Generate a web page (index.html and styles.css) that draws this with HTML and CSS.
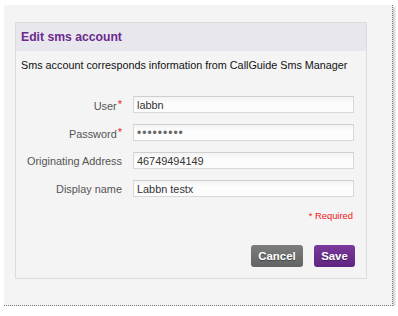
FILE: index.html
```html
<!DOCTYPE html>
<html lang="en">
<head>
  <meta charset="UTF-8" />
  <title>Edit sms account</title>
  <link rel="stylesheet" href="styles.css">
</head>
<body>
  <div class="sheet">
    <div class="panel">
      <div class="panel-head">Edit sms account</div>
      <p class="intro">Sms account corresponds information from CallGuide Sms Manager</p>
      <form class="account-form">
        <label for="user">User<span class="req">*</span></label>
        <input type="text" id="user" value="labbn" />
        <label for="password">Password<span class="req">*</span></label>
        <input type="password" id="password" value="secret123" />
        <label for="address">Originating Address</label>
        <input type="text" id="address" value="46749494149" />
        <label for="display">Display name</label>
        <input type="text" id="display" value="Labbn testx" />
      </form>
      <div class="required-note">* Required</div>
      <div class="actions">
        <button type="button" class="btn btn-cancel">Cancel</button>
        <button type="button" class="btn btn-save">Save</button>
      </div>
    </div>
  </div>
</body>
</html>
```

FILE: styles.css
```css
* {
  margin: 0;
  padding: 0;
  box-sizing: border-box;
}
body {
  font-family: 'Liberation Sans', Arial, sans-serif;
  background-color: #ffffff;
  color: #222;
}
.sheet {
  width: 389px;
  height: 301px;
  margin: 5px 0 0 4px;
  padding: 17px 0 0 11px;
  background-color: #f4f4f4;
  border-right: 1px dotted #777;
  border-bottom: 1px dotted #777;
  box-shadow: 2px 2px 2px rgba(0, 0, 0, 0.2);
}
.panel {
  width: 352px;
  height: 257px;
  border: 1px solid #dcdcdc;
  background-color: #f4f4f4;
  display: flex;
  flex-direction: column;
}
.panel-head {
  height: 28px;
  padding: 7px 0 0 5px;
  background-color: #e8e7ed;
  color: #6a2a8e;
  font-size: 12.2px;
  font-weight: bold;
}
.intro {
  padding: 7px 0 0 5px;
  font-size: 10.8px;
  line-height: 14px;
  color: #111;
  white-space: nowrap;
}
.account-form {
  display: grid;
  grid-template-columns: 106px 221px;
  column-gap: 11px;
  row-gap: 11px;
  margin-top: 24px;
  align-items: center;
}
.account-form label {
  text-align: right;
  font-size: 10.9px;
  color: #555;
  white-space: nowrap;
}
.req {
  color: #e21c1c;
  font-size: 11px;
  vertical-align: 2px;
  margin-left: 1px;
}
.account-form input {
  height: 17px;
  padding: 0 3px;
  font-family: 'Liberation Sans', Arial, sans-serif;
  font-size: 10.9px;
  color: #333;
  border: 1px solid #d8d8d8;
  border-top-color: #cfcfcf;
  background: linear-gradient(#f3f3f3, #fcfcfc 40%);
}
.account-form input[type="password"] {
  font-size: 12px;
  letter-spacing: 1px;
  color: #666;
}
.required-note {
  margin-top: 13px;
  padding-right: 13px;
  text-align: right;
  font-size: 9.4px;
  line-height: 11px;
  color: #f01818;
}
.actions {
  display: flex;
  justify-content: flex-end;
  gap: 11px;
  margin-top: 24px;
  padding-right: 11px;
}
.btn {
  height: 22px;
  padding: 0;
  border: none;
  border-radius: 3px;
  color: #fff;
  font-family: 'Liberation Sans', Arial, sans-serif;
  font-size: 11.4px;
  font-weight: bold;
  text-shadow: 0 1px 1px rgba(0, 0, 0, 0.4);
  cursor: pointer;
}
.btn-cancel {
  width: 52px;
  background: linear-gradient(#7c7e7e, #626464);
}
.btn-save {
  width: 41px;
  background: linear-gradient(#7a3a9c, #5f2481);
}
```
